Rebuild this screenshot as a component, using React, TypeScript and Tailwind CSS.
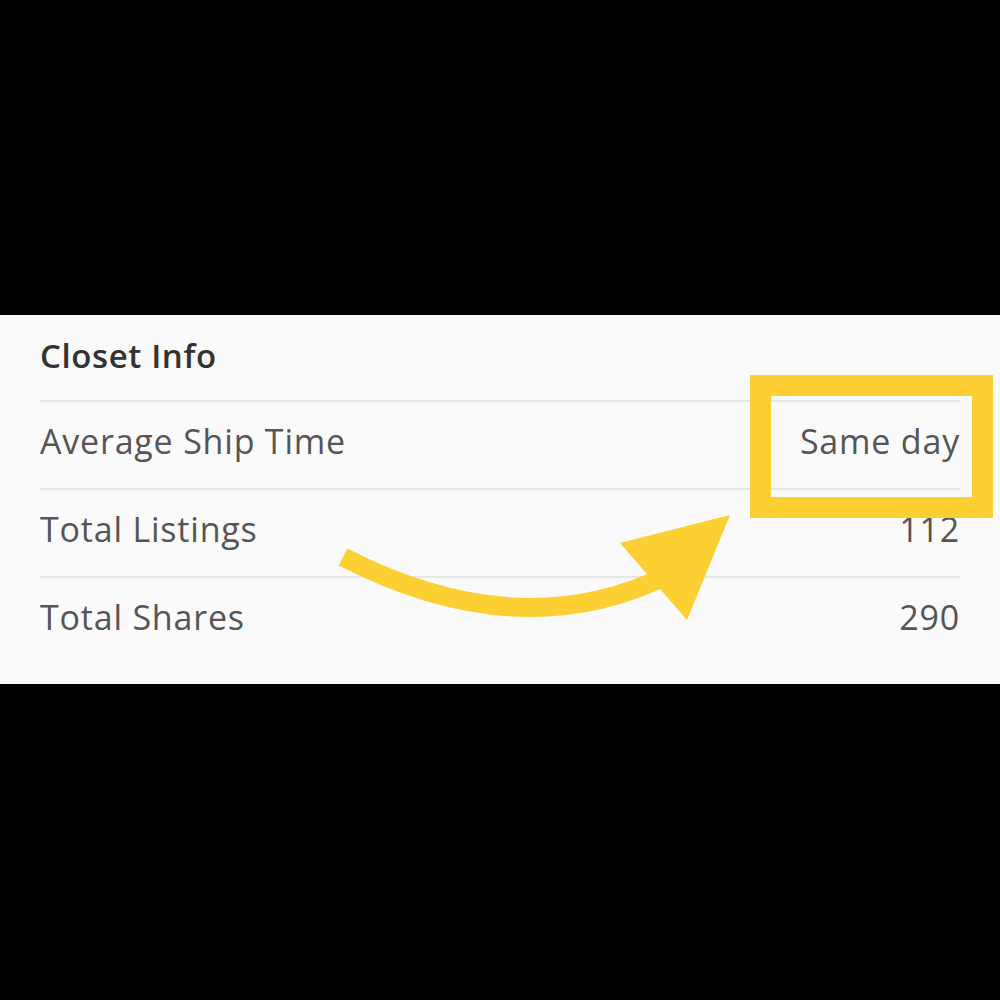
import React from "react";

const rows = [
  { label: "Average Ship Time", value: "Same day" },
  { label: "Total Listings", value: "112" },
  { label: "Total Shares", value: "290" },
];

export default function App() {
  return (
    <div className="w-[1000px] h-[1000px] bg-black flex flex-col" style={{ fontFamily: "'Open Sans', 'Lato', sans-serif" }}>
      <div className="h-[315px]" />
      <div className="relative h-[369px] bg-[#fafafa] px-[40px]">
        <div className="h-[85px] flex items-center pb-[4px]">
          <span className="text-[33px] font-semibold text-[#333333] tracking-[0.6px]">Closet Info</span>
        </div>
        {rows.map((r, i) => (
          <div key={i} className="h-[88px] border-t-[2px] border-[#e6e6e6] flex items-center justify-between pb-[8px]">
            <span className="text-[34px] text-[#555555] tracking-[0.8px]">{r.label}</span>
            <span className="text-[34px] text-[#555555] tracking-[0.8px]">{r.value}</span>
          </div>
        ))}
        <div className="absolute left-[750px] top-[60px] w-[243px] h-[143px] border-[21px] border-[#fccf33]" />
        <svg className="absolute left-0 top-0" width="1000" height="369" viewBox="0 315 1000 369">
          <path d="M 343 557 Q 520 648 668 575" fill="none" stroke="#fccf33" strokeWidth="19" />
          <polygon points="620,543 730,515 687,620" fill="#fccf33" />
        </svg>
      </div>
    </div>
  );
}
